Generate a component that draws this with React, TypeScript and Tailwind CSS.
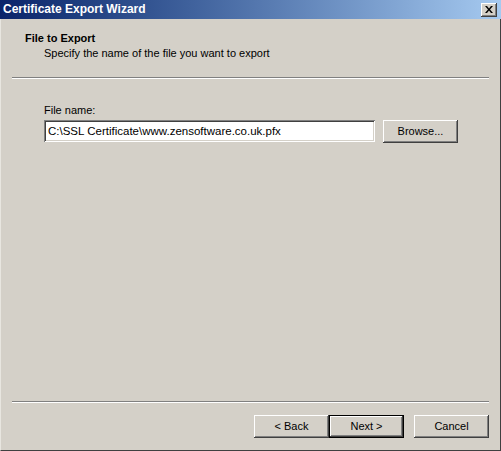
import React from "react";

const FACE = "font-['Tahoma','Liberation_Sans',sans-serif]";

/** Classic raised 3D edge used on push buttons. */
const RAISED =
  "shadow-[inset_-1px_-1px_0_#404040,inset_1px_1px_0_#ffffff,inset_-2px_-2px_0_#808080,inset_2px_2px_0_#d4d0c8]";
/** Sunken edge for edit boxes. */
const SUNKEN =
  "shadow-[inset_1px_1px_0_#808080,inset_-1px_-1px_0_#ffffff,inset_2px_2px_0_#404040,inset_-2px_-2px_0_#d4d0c8]";

function PushButton({ label, isDefault = false }: { label: string; isDefault?: boolean }) {
  return (
    <button
      className={`flex h-[23px] w-[75px] items-center justify-center bg-[#d4d0c8] text-[11px] text-black ${
        isDefault ? "border border-black" : ""
      } ${RAISED}`}
      type="button"
    >
      {label}
    </button>
  );
}

function Etched({ className = "" }: { className?: string }) {
  return (
    <div className={`flex flex-col ${className}`}>
      <div className="h-px bg-[#808080]" />
      <div className="h-px bg-white" />
    </div>
  );
}

export default function App() {
  return (
    <div className={`flex h-[451px] w-[501px] flex-col bg-[#d4d0c8] text-[11px] leading-[13px] text-black ${FACE}`}>
      <div className="flex h-[19px] shrink-0 items-center justify-between bg-gradient-to-r from-[#0a246a] to-[#a6caf0] pl-[3px] pr-[4px]">
        <span className="text-[12px] font-bold text-white">Certificate Export Wizard</span>
        <button className={`flex h-[14px] w-[16px] items-center justify-center bg-[#d4d0c8] ${RAISED}`} type="button">
          <svg height="7" viewBox="0 0 8 7" width="8">
            <path d="M0 0h2l2 2.5L6 0h2L5 3.5 8 7H6L4 4.5 2 7H0l3-3.5z" fill="#000" />
          </svg>
        </button>
      </div>

      <div className="flex flex-1 flex-col border-b border-l border-r border-b-[#404040] border-l-[#e8e6e0] border-r-[#404040]">
        <div className="flex flex-col pt-[13px]">
          <div className="pl-[24px] font-bold">File to Export</div>
          <div className="pl-[43px] pt-[2px]">Specify the name of the file you want to export</div>
          <Etched className="mx-[11px] mt-[17px]" />
        </div>

        <div className="flex flex-col pl-[43px] pt-[25px]">
          <div>File name:</div>
          <div className="mt-[3px] flex items-start gap-[8px]">
            <div className={`flex h-[22px] w-[331px] items-center bg-white px-[4px] text-[11.5px] ${SUNKEN}`}>
              C:\SSL Certificate\www.zensoftware.co.uk.pfx
            </div>
            <PushButton label="Browse..." />
          </div>
        </div>

        <div className="flex-1" />

        <Etched className="mx-[11px]" />
        <div className="flex justify-end pb-[12px] pr-[11px] pt-[12px]">
          <PushButton label="< Back" />
          <PushButton isDefault label="Next >" />
          <div className="w-[10px]" />
          <PushButton label="Cancel" />
        </div>
      </div>
    </div>
  );
}
